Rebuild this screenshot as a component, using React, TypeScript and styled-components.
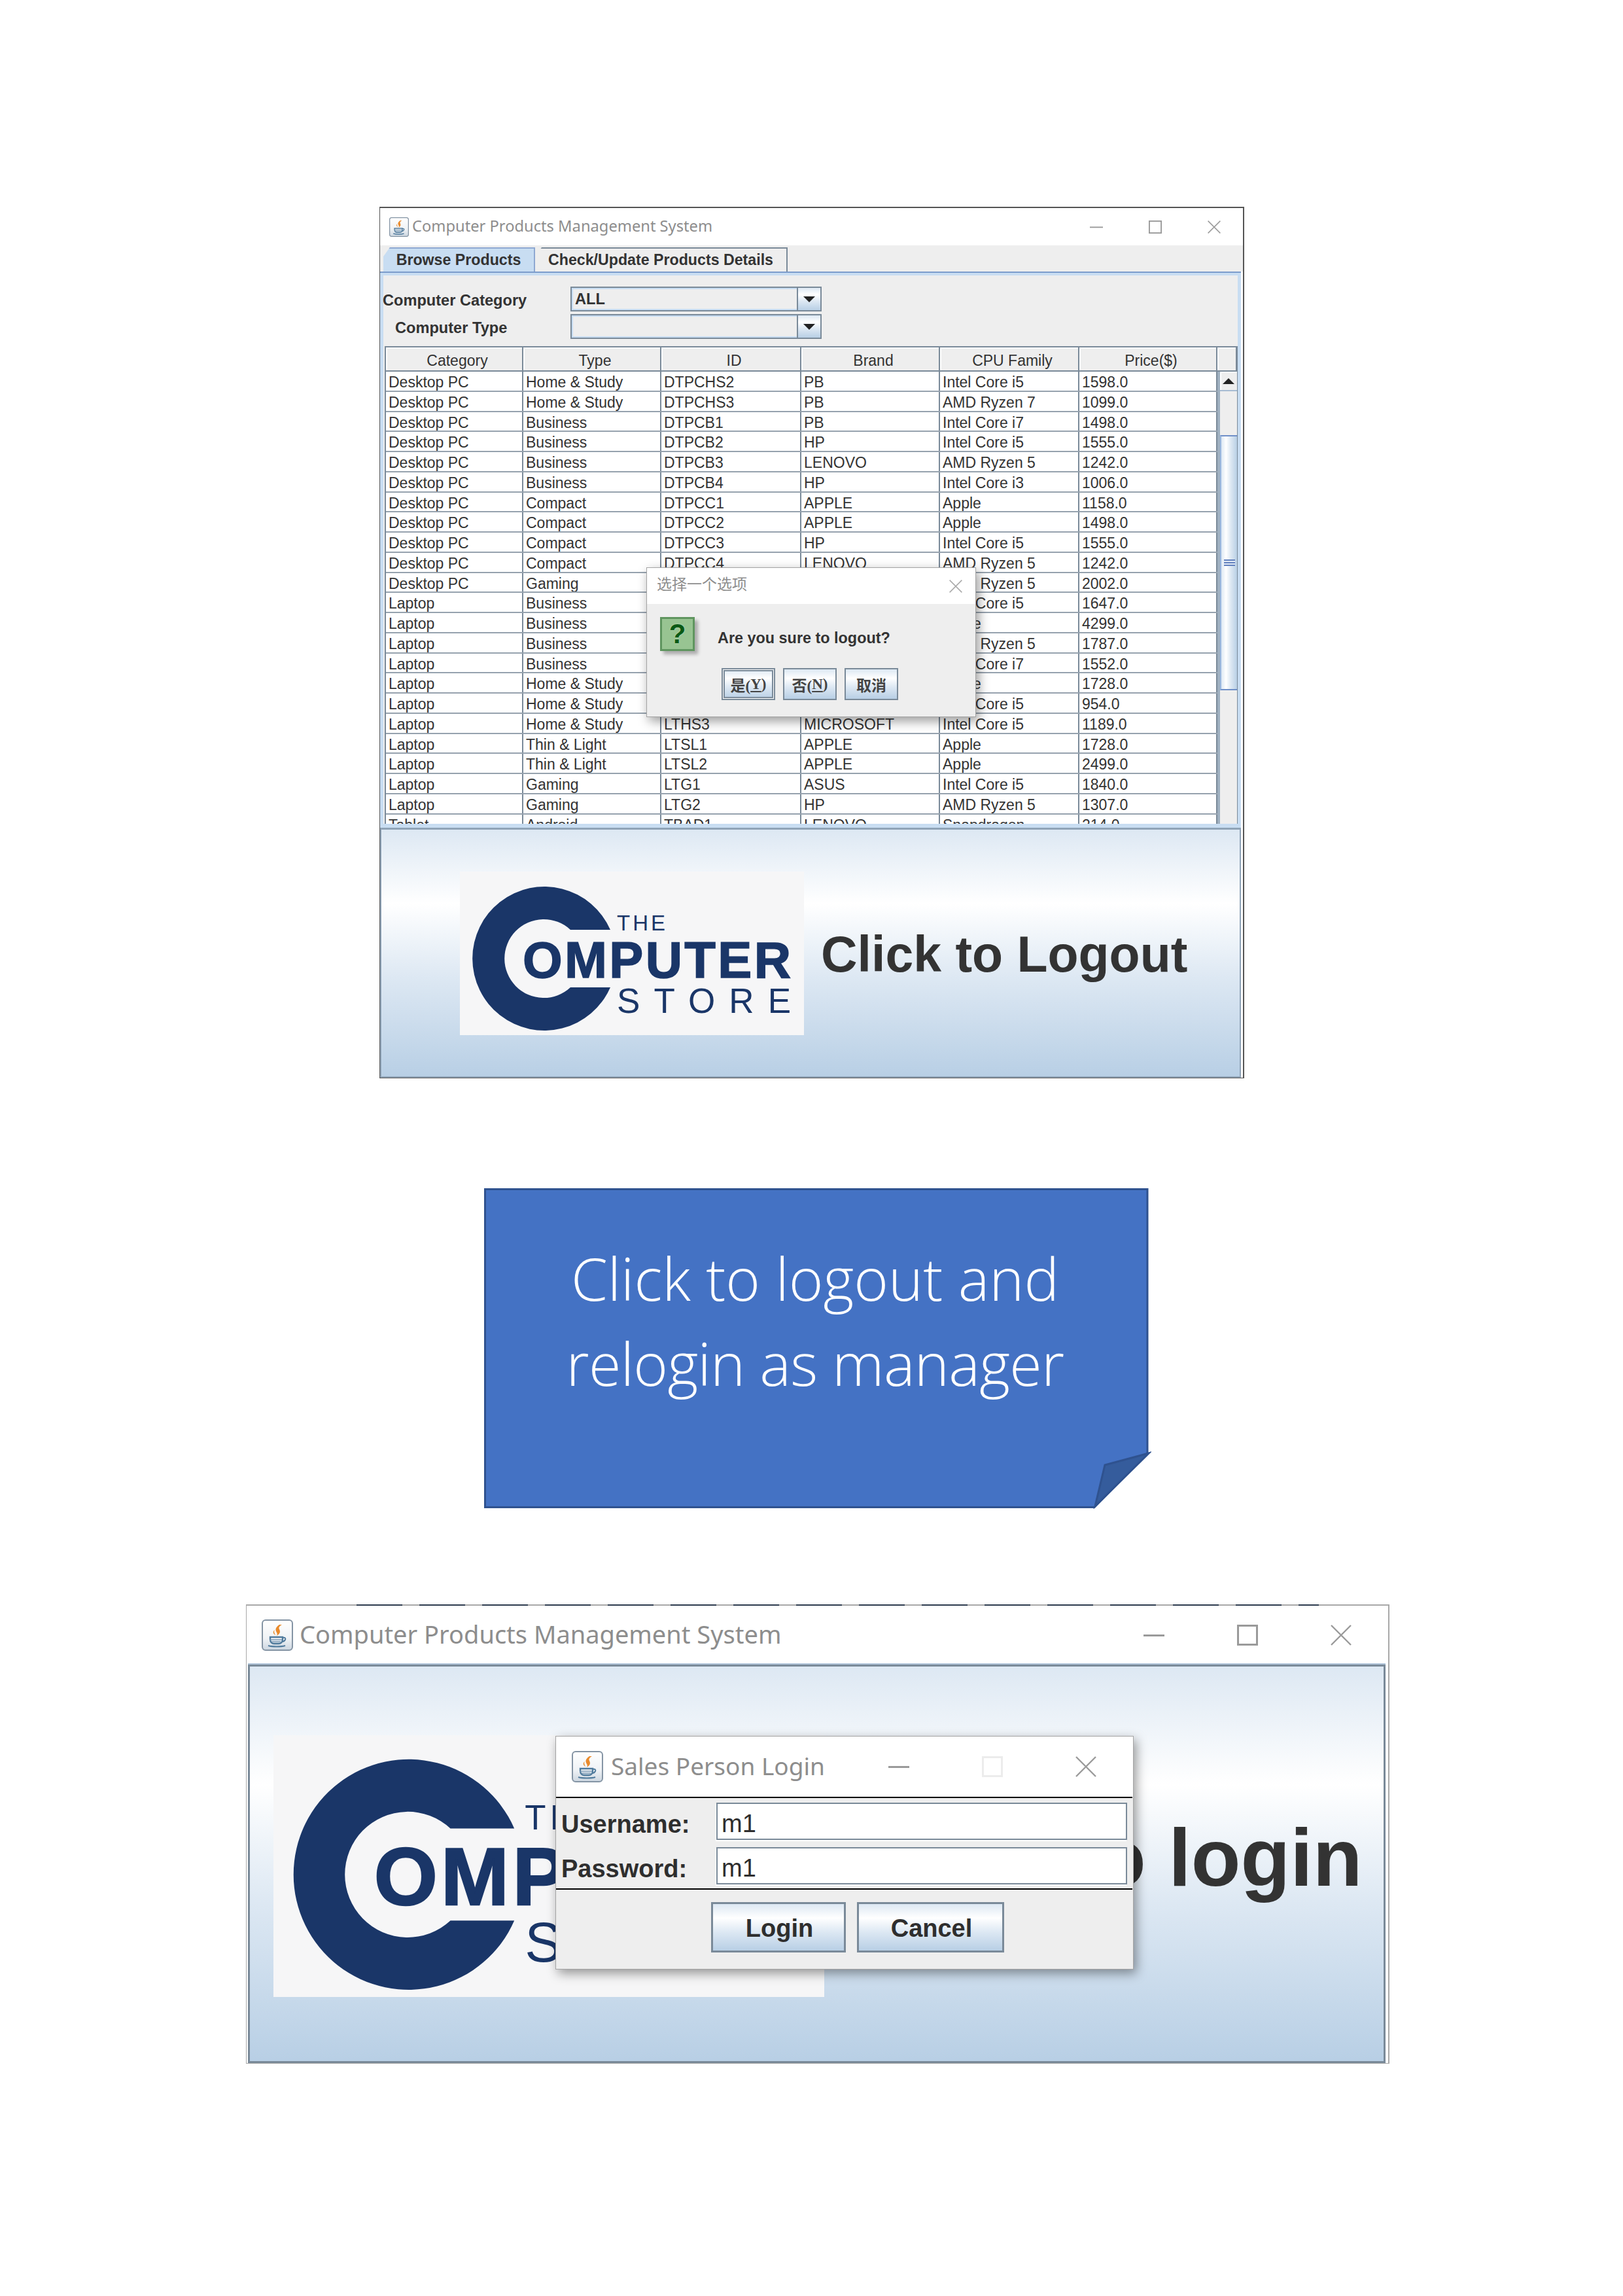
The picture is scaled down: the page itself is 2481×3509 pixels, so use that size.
import React from "react";
import styled, { createGlobalStyle } from "styled-components";

const GlobalStyle = createGlobalStyle`
  html, body {
    margin: 0;
    padding: 0;
    background: #fff;
  }
  * {
    box-sizing: border-box;
  }
`;

const metal = (dir: string) =>
  `linear-gradient(${dir}, #dde8f3 0%, #fff 30%, #dde8f3 60%, #b8cfe5 100%)`;

const SWING_FONT = `"Liberation Sans", Arial, "Noto Sans CJK SC", sans-serif`;
const TITLE_FONT = `"Noto Sans", "Noto Sans CJK SC", sans-serif`;
const NAVY = "#1a3668";
const LINE = "#7a8a99";
const BAND = "#c8ddf2";

const Page = styled.div`
  width: 2481px;
  height: 3509px;
  padding-top: 316px;
  display: flex;
  flex-direction: column;
  overflow: hidden;
`;

const Window = styled.div<{ $left: number; $width: number; $height: number; $top: number; $edge: string }>`
  position: relative;
  flex: none;
  margin-left: ${(p) => p.$left}px;
  margin-top: ${(p) => p.$top}px;
  width: ${(p) => p.$width}px;
  height: ${(p) => p.$height}px;
  display: flex;
  flex-direction: column;
  background: #fff;
  border: 1px solid ${(p) => p.$edge};
  border-top-width: 2px;
  border-right-width: 2px;
`;

const TitleBar = styled.div<{ $height: number; $pad: number; $gap: number; $size: number }>`
  flex: none;
  height: ${(p) => p.$height}px;
  padding-left: ${(p) => p.$pad}px;
  display: flex;
  align-items: center;
  gap: ${(p) => p.$gap}px;
  font-family: ${TITLE_FONT};
  font-size: ${(p) => p.$size}px;
  color: #8d8d8d;
  background: #fff;
  white-space: nowrap;
`;

const TitleText = styled.span<{ $lift: number }>`
  flex: none;
  padding-bottom: ${(p) => p.$lift}px;
`;

const Controls = styled.div<{ $right: number; $step: number }>`
  margin-left: auto;
  margin-right: ${(p) => p.$right}px;
  display: flex;
  gap: ${(p) => p.$step}px;
  align-items: center;
`;

const JavaIcon = ({ size }: { size: number }) => (
  <svg width={size} height={size} viewBox="0 0 48 48" style={{ flex: "none" }}>
    <defs>
      <linearGradient id="javaBg" x1="0" y1="0" x2="0" y2="1">
        <stop offset="0" stopColor="#fff" />
        <stop offset="0.6" stopColor="#f0f3f6" />
        <stop offset="1" stopColor="#ccd6e0" />
      </linearGradient>
    </defs>
    <rect x="1" y="1" width="46" height="46" rx="5" fill="url(#javaBg)" stroke="#8494a4" strokeWidth="2" />
    <path d="M27 8c-7 5-6 8-4 12 1 2 1 3 0 5 5-3 6-6 4-10-1-2-1-4 4-7z" fill="#e98a2c" />
    <path d="M20 16c-2 3 0 5 1 8-3-2-5-5-1-8z" fill="#e98a2c" />
    <path d="M13 27h19v3c0 5-3 7-6 7h-7c-3 0-6-2-6-7z" fill="none" stroke="#4f7a9c" strokeWidth="2.4" />
    <path d="M32 28c4-1 5 1 4 3-1 2-3 3-5 3" fill="none" stroke="#4f7a9c" strokeWidth="2" />
    <path d="M13 31h18M15 34h14" stroke="#7d9cb6" strokeWidth="1.6" />
    <path d="M10 40c6 2 20 2 26 0" fill="none" stroke="#4f7a9c" strokeWidth="2.2" />
  </svg>
);

const WinIcon = ({ kind, size, color = "#9a9a9a" }: { kind: "min" | "max" | "close"; size: number; color?: string }) => (
  <svg width={size} height={size} viewBox="0 0 32 32" fill="none" stroke={color} strokeWidth="2.4">
    {kind === "min" && <path d="M0 16.5h32" strokeWidth="3" />}
    {kind === "max" && <rect x="1.5" y="1.5" width="29" height="29" strokeWidth="3" />}
    {kind === "close" && <path d="M1 1l30 30M31 1L1 31" />}
  </svg>
);

const LogoSvg = styled.svg`
  flex: none;
  display: block;
`;

const Logo = ({ width }: { width: number }) => (
  <LogoSvg width={width} viewBox="0 0 526 250">
    <rect width="526" height="250" fill="#f6f6f7" />
    <path d="M230 89A110 110 0 1 0 230 177L169 177A60 60 0 1 1 169 89Z" fill={NAVY} />
    <g fill={NAVY} fontFamily={SWING_FONT} fontWeight="400">
      <text x="96" y="162" fontSize="78" fontWeight="700" stroke={NAVY} strokeWidth="1.5" textLength="410">
        OMPUTER
      </text>
      <text x="240" y="90" fontSize="33" textLength="74">
        THE
      </text>
      <text x="240" y="216" fontSize="53" textLength="266">
        STORE
      </text>
    </g>
  </LogoSvg>
);

const Banner = styled.div<{ $pad: number; $gap: number; $size: number; $drop: number }>`
  flex: 1;
  display: flex;
  align-items: center;
  gap: ${(p) => p.$gap}px;
  padding: ${(p) => p.$drop}px 0 0 ${(p) => p.$pad}px;
  background: ${metal("to bottom")};
  font-family: ${SWING_FONT};
  font-weight: 700;
  font-size: ${(p) => p.$size}px;
  color: #333;
  white-space: nowrap;
  overflow: hidden;
`;

const BannerText = styled.span<{ $lift: number }>`
  margin-bottom: ${(p) => p.$lift}px;
`;

/* --- first window: tabs, filters, table --- */

const TabStrip = styled.div`
  flex: none;
  height: 40px;
  padding: 3px 0 0 5px;
  display: flex;
  align-items: stretch;
  background: #eee;
`;

const Tab = styled.div<{ $active?: boolean; $width: number }>`
  width: ${(p) => p.$width}px;
  display: flex;
  align-items: center;
  justify-content: center;
  font: 700 23.2px ${SWING_FONT};
  color: #333;
  background: ${(p) => (p.$active ? BAND : "#eee")};
  border: 2px solid ${(p) => (p.$active ? "#8ea8d2" : LINE)};
  border-bottom: 0;
  border-left-width: 0;
  clip-path: polygon(10px 0, 100% 0, 100% 100%, 0 100%, 0 14px);
`;

const TabBody = styled.div`
  flex: none;
  height: 850px;
  margin-right: 3px;
  border-top: 2px solid #7c9ccb;
  background: #eee;
  padding: 21px 5px 6px 7px;
  box-shadow: inset 0 4px 0 ${BAND}, inset 5px 0 0 ${BAND}, inset -5px 0 0 ${BAND}, inset 0 -6px 0 ${BAND};
  display: flex;
  flex-direction: column;
`;

const Filters = styled.div`
  flex: none;
  display: flex;
  flex-direction: column;
  gap: 4px;
  margin-bottom: 11px;
  margin-left: -3px;
`;

const FilterRow = styled.div<{ $indent: number }>`
  display: flex;
  align-items: center;
  padding-left: ${(p) => p.$indent}px;
`;

const FilterLabel = styled.div<{ $width: number }>`
  width: ${(p) => p.$width}px;
  padding-top: 4px;
  font: 700 23.6px ${SWING_FONT};
  color: #333;
  white-space: nowrap;
`;

const Combo = styled.div`
  width: 384px;
  height: 38px;
  display: flex;
  border: 2px solid ${LINE};
  background: #eee;
`;

const ComboValue = styled.div`
  flex: 1;
  padding-left: 3px;
  border: 2px solid ${BAND};
  border-right: 0;
  display: flex;
  align-items: center;
  font: 700 23.6px ${SWING_FONT};
  color: #333;
`;

const ComboArrow = styled.div`
  flex: none;
  width: 36px;
  display: flex;
  align-items: center;
  justify-content: center;
  background: ${metal("to bottom")};
  border-left: 2px solid ${LINE};
`;

const Triangle = styled.span<{ $up?: boolean; $w: number }>`
  display: block;
  width: 0;
  height: 0;
  border-left: ${(p) => p.$w}px solid transparent;
  border-right: ${(p) => p.$w}px solid transparent;
  ${(p) => (p.$up ? "border-bottom" : "border-top")}: ${(p) => p.$w}px solid #222;
`;

const ScrollPane = styled.div`
  flex: 1;
  min-height: 0;
  display: flex;
  flex-direction: column;
  border: 2px solid ${LINE};
  border-bottom: 0;
  border-right-width: 1px;
`;

const COLUMNS = "210px 211px 214px 212px 213px 211px";

const HeaderRow = styled.div`
  flex: none;
  height: 37px;
  display: grid;
  grid-template-columns: ${COLUMNS} 1fr;
  border-bottom: 2px solid ${LINE};
  background: #eee;
`;

const HeaderCell = styled.div`
  display: flex;
  align-items: center;
  justify-content: center;
  padding: 6px 0 0 10px;
  font: 400 23px ${SWING_FONT};
  color: #333;
  border-right: 2px solid ${LINE};
  box-shadow: inset 2px 2px 0 #fff;
`;

const BodyArea = styled.div`
  flex: 1;
  min-height: 0;
  display: flex;
  overflow: hidden;
`;

const Rows = styled.div`
  flex: none;
  width: 1271px;
  background: #fff;
  overflow: hidden;
`;

const Row = styled.div`
  height: 30.75px;
  display: grid;
  grid-template-columns: ${COLUMNS};
  border-bottom: 2px solid #96a2ae;
`;

const Cell = styled.div`
  padding: 3px 0 0 4px;
  border-right: 2px solid ${LINE};
  font: 400 23px/26px ${SWING_FONT};
  color: #333;
  white-space: nowrap;
  overflow: hidden;
`;

const ScrollBar = styled.div`
  flex: 1;
  display: flex;
  flex-direction: column;
  background: #eee;
  border-left: 4px solid #9fb0c0;
`;

const ScrollUp = styled.div`
  flex: none;
  height: 30px;
  display: flex;
  align-items: center;
  justify-content: center;
  background: #eee;
  box-shadow: inset 2px 2px 0 #fff;
  border-bottom: 2px solid #a6bbd2;
`;

const ScrollGap = styled.div<{ $height?: number }>`
  flex: ${(p) => (p.$height ? `none` : 1)};
  height: ${(p) => (p.$height ? `${p.$height}px` : "auto")};
`;

const ScrollThumb = styled.div`
  flex: none;
  height: 390px;
  display: flex;
  align-items: center;
  justify-content: center;
  background: ${metal("to right")};
  border-top: 2px solid #6f8fc8;
  border-bottom: 2px solid #6f8fc8;
  border-left: 2px solid #9ab8e0;
`;

const Grip = styled.div`
  width: 17px;
  height: 10px;
  background: repeating-linear-gradient(to bottom, #6382bf 0 2px, #dfe8f4 2px 4px);
`;

const LogoutPanel = styled(Banner)`
  border: 2px solid #8fa3b7;
  border-top-width: 3px;
  margin-right: 3px;
`;

/* --- floating dialogs --- */

const Dialog = styled.div<{ $left: number; $top: number; $width: number; $height: number }>`
  position: absolute;
  left: ${(p) => p.$left}px;
  top: ${(p) => p.$top}px;
  width: ${(p) => p.$width}px;
  height: ${(p) => p.$height}px;
  display: flex;
  flex-direction: column;
  background: #eee;
  border: 1px solid #a4a4a4;
  box-shadow: 4px 6px 16px rgba(0, 0, 0, 0.4);
`;

const ConfirmBody = styled.div`
  flex: 1;
  padding: 20px 0 0 20px;
  display: flex;
  flex-direction: column;
`;

const ConfirmTop = styled.div`
  display: flex;
  align-items: center;
  gap: 35px;
  height: 52px;
`;

const QuestionBadge = styled.div`
  flex: none;
  width: 53px;
  height: 52px;
  display: flex;
  align-items: center;
  justify-content: center;
  background: #98c492;
  border: 3px solid #5f955f;
  box-shadow: 5px 5px 5px rgba(0, 0, 0, 0.28);
  font: 700 42px ${SWING_FONT};
  color: #0a5a14;
  text-shadow: 0 0 2px #cfe8cb;
`;

const ConfirmText = styled.div`
  font: 700 23.4px ${SWING_FONT};
  color: #333;
  padding-top: 12px;
  white-space: nowrap;
`;

const ConfirmButtons = styled.div`
  margin: 26px 0 0 94px;
  display: flex;
  gap: 12px;
`;

const SmallButton = styled.div<{ $focus?: boolean }>`
  width: 82px;
  height: 49px;
  display: flex;
  align-items: center;
  justify-content: center;
  background: ${metal("to bottom")};
  border: 2px solid ${LINE};
  box-shadow: ${(p) => (p.$focus ? `inset 0 0 0 1px #fff, inset 0 0 0 3px ${LINE}` : "none")};
  font: 700 23px "Liberation Serif", "Noto Sans CJK SC", serif;
  color: #444;
  white-space: nowrap;
`;

const Mnemonic = styled.u`
  text-underline-offset: 3px;
`;

const LoginFields = styled.div`
  flex: none;
  height: 142px;
  margin-right: 1px;
  padding: 7px 8px 0 8px;
  border-top: 2px solid #000;
  border-bottom: 2px solid #000;
  display: flex;
  flex-direction: column;
  gap: 11px;
`;

const LoginRow = styled.div`
  height: 57px;
  display: flex;
  align-items: center;
`;

const LoginLabel = styled.div`
  flex: none;
  width: 237px;
  padding-top: 9px;
  font: 700 38px ${SWING_FONT};
  color: #2e2e2e;
`;

const LoginInput = styled.div`
  flex: 1;
  height: 57px;
  padding: 8px 0 0 6px;
  display: flex;
  align-items: center;
  background: #fff;
  border: 2px solid ${LINE};
  box-shadow: -1px 2px 0 #fff;
  font: 400 38px ${SWING_FONT};
  color: #2e2e2e;
`;

const LoginButtons = styled.div`
  margin: 19px 0 0 237px;
  display: flex;
  gap: 17px;
`;

const BigButton = styled.div<{ $width: number }>`
  width: ${(p) => p.$width}px;
  height: 77px;
  padding: 3px 0 0 3px;
  display: flex;
  align-items: center;
  justify-content: center;
  background: ${metal("to bottom")};
  border: 3px solid ${LINE};
  font: 700 38px ${SWING_FONT};
  color: #2e2e2e;
`;

/* --- note between the screenshots --- */

const Note = styled.div`
  position: relative;
  flex: none;
  margin: 168px 0 0 740px;
  width: 1020px;
  height: 490px;
  padding: 72px 8px 0 0;
  display: flex;
  flex-direction: column;
  align-items: center;
  font: 300 90px/130px "Open Sans", sans-serif;
  color: #fff;
`;

const NoteShape = styled.svg`
  position: absolute;
  left: 0;
  top: 0;
`;

const NoteLine = styled.div<{ $track?: number }>`
  position: relative;
  white-space: nowrap;
  letter-spacing: ${(p) => p.$track ?? 0}px;
`;

/* the black dashes on the top edge of the third window */
const TopTrace = styled.div`
  position: absolute;
  left: 168px;
  right: 106px;
  top: -2px;
  height: 2px;
  background: repeating-linear-gradient(to right, #2c3a4e 0 70px, #a8a8a8 70px 96px);
`;

const LoginPanel = styled(Banner)`
  border: 3px solid ${LINE};
  margin: 0 4px 0 2px;
  box-shadow: 0 -2px 0 #b0c4d8;
`;

const products: string[][] = [
  ["Desktop PC", "Home & Study", "DTPCHS2", "PB", "Intel Core i5", "1598.0"],
  ["Desktop PC", "Home & Study", "DTPCHS3", "PB", "AMD Ryzen 7", "1099.0"],
  ["Desktop PC", "Business", "DTPCB1", "PB", "Intel Core i7", "1498.0"],
  ["Desktop PC", "Business", "DTPCB2", "HP", "Intel Core i5", "1555.0"],
  ["Desktop PC", "Business", "DTPCB3", "LENOVO", "AMD Ryzen 5", "1242.0"],
  ["Desktop PC", "Business", "DTPCB4", "HP", "Intel Core i3", "1006.0"],
  ["Desktop PC", "Compact", "DTPCC1", "APPLE", "Apple", "1158.0"],
  ["Desktop PC", "Compact", "DTPCC2", "APPLE", "Apple", "1498.0"],
  ["Desktop PC", "Compact", "DTPCC3", "HP", "Intel Core i5", "1555.0"],
  ["Desktop PC", "Compact", "DTPCC4", "LENOVO", "AMD Ryzen 5", "1242.0"],
  ["Desktop PC", "Gaming", "DTPCG1", "ASUS", "AMD Ryzen 5", "2002.0"],
  ["Laptop", "Business", "LTB1", "HP", "Intel Core i5", "1647.0"],
  ["Laptop", "Business", "LTB2", "APPLE", "Apple", "4299.0"],
  ["Laptop", "Business", "LTB3", "ASUS", "AMD Ryzen 5", "1787.0"],
  ["Laptop", "Business", "LTB4", "HP", "Intel Core i7", "1552.0"],
  ["Laptop", "Home & Study", "LTHS1", "APPLE", "Apple", "1728.0"],
  ["Laptop", "Home & Study", "LTHS2", "ASUS", "Intel Core i5", "954.0"],
  ["Laptop", "Home & Study", "LTHS3", "MICROSOFT", "Intel Core i5", "1189.0"],
  ["Laptop", "Thin & Light", "LTSL1", "APPLE", "Apple", "1728.0"],
  ["Laptop", "Thin & Light", "LTSL2", "APPLE", "Apple", "2499.0"],
  ["Laptop", "Gaming", "LTG1", "ASUS", "Intel Core i5", "1840.0"],
  ["Laptop", "Gaming", "LTG2", "HP", "AMD Ryzen 5", "1307.0"],
  ["Tablet", "Android", "TBAD1", "LENOVO", "Snapdragon", "214.0"],
];

const headers = ["Category", "Type", "ID", "Brand", "CPU Family", "Price($)"];

export default function App() {
  return (
    <Page>
      <GlobalStyle />

      <Window $left={580} $top={0} $width={1322} $height={1332} $edge="#555">
        <TitleBar $height={57} $pad={14} $gap={5} $size={23.7}>
          <JavaIcon size={30} />
          <TitleText $lift={4}>Computer Products Management System</TitleText>
          <Controls $right={34} $step={70}>
            <WinIcon kind="min" size={20} />
            <WinIcon kind="max" size={20} />
            <WinIcon kind="close" size={20} />
          </Controls>
        </TitleBar>

        <TabStrip>
          <Tab $active $width={232}>Browse Products</Tab>
          <Tab $width={386}>Check/Update Products Details</Tab>
        </TabStrip>

        <TabBody>
          <Filters>
            <FilterRow $indent={0}>
              <FilterLabel $width={287}>Computer Category</FilterLabel>
              <Combo>
                <ComboValue>ALL</ComboValue>
                <ComboArrow><Triangle $w={9} /></ComboArrow>
              </Combo>
            </FilterRow>
            <FilterRow $indent={19}>
              <FilterLabel $width={268}>Computer Type</FilterLabel>
              <Combo>
                <ComboValue />
                <ComboArrow><Triangle $w={9} /></ComboArrow>
              </Combo>
            </FilterRow>
          </Filters>

          <ScrollPane>
            <HeaderRow>
              {headers.map((h) => (
                <HeaderCell key={h}>{h}</HeaderCell>
              ))}
              <HeaderCell />
            </HeaderRow>
            <BodyArea>
              <Rows>
                {products.map((row) => (
                  <Row key={row[2]}>
                    {row.map((c, i) => (
                      <Cell key={i}>{c}</Cell>
                    ))}
                  </Row>
                ))}
              </Rows>
              <ScrollBar>
                <ScrollUp><Triangle $up $w={9} /></ScrollUp>
                <ScrollGap $height={67} />
                <ScrollThumb><Grip /></ScrollThumb>
                <ScrollGap />
              </ScrollBar>
            </BodyArea>
          </ScrollPane>
        </TabBody>

        <LogoutPanel $pad={120} $gap={26} $size={77} $drop={0}>
          <Logo width={526} />
          <BannerText $lift={-4}>Click to Logout</BannerText>
        </LogoutPanel>

        <Dialog $left={407} $top={549} $width={504} $height={229}>
          <TitleBar $height={55} $pad={15} $gap={0} $size={23}>
            <TitleText $lift={9}>选择一个选项</TitleText>
            <Controls $right={20} $step={0}>
              <WinIcon kind="close" size={20} color="#a8a8a8" />
            </Controls>
          </TitleBar>
          <ConfirmBody>
            <ConfirmTop>
              <QuestionBadge>?</QuestionBadge>
              <ConfirmText>Are you sure to logout?</ConfirmText>
            </ConfirmTop>
            <ConfirmButtons>
              <SmallButton $focus>是(<Mnemonic>Y</Mnemonic>)</SmallButton>
              <SmallButton>否(<Mnemonic>N</Mnemonic>)</SmallButton>
              <SmallButton>取消</SmallButton>
            </ConfirmButtons>
          </ConfirmBody>
        </Dialog>
      </Window>

      <Note>
        <NoteShape width="1020" height="490" viewBox="0 0 1020 490">
          <path d="M1.5 1.5H1014V405L933 487.5H1.5Z" fill="#4472c4" stroke="#2f528f" strokeWidth="3" />
          <path d="M934 486L949 423L1016 405Z" fill="#355c9c" stroke="#2f528f" strokeWidth="3" strokeLinejoin="miter" />
        </NoteShape>
        <NoteLine>Click to logout and</NoteLine>
        <NoteLine $track={-0.7}>relogin as manager</NoteLine>
      </Note>

      <Window $left={376} $top={146} $width={1748} $height={702} $edge="#a8a8a8">
        <TopTrace />
        <TitleBar $height={90} $pad={23} $gap={10} $size={38}>
          <JavaIcon size={48} />
          <TitleText $lift={4}>Computer Products Management System</TitleText>
          <Controls $right={56} $step={111}>
            <WinIcon kind="min" size={32} />
            <WinIcon kind="max" size={32} />
            <WinIcon kind="close" size={32} />
          </Controls>
        </TitleBar>

        <LoginPanel $pad={36} $gap={44} $size={124} $drop={7}>
          <Logo width={842} />
          <BannerText $lift={26}>Click to login</BannerText>
        </LoginPanel>

        <Dialog $left={472} $top={199} $width={884} $height={357}>
          <TitleBar $height={92} $pad={24} $gap={12} $size={37}>
            <JavaIcon size={48} />
            <TitleText $lift={4}>Sales Person Login</TitleText>
            <Controls $right={56} $step={111}>
              <WinIcon kind="min" size={32} />
              <WinIcon kind="max" size={32} color="#ececec" />
              <WinIcon kind="close" size={32} />
            </Controls>
          </TitleBar>
          <LoginFields>
            <LoginRow>
              <LoginLabel>Username:</LoginLabel>
              <LoginInput>m1</LoginInput>
            </LoginRow>
            <LoginRow>
              <LoginLabel>Password:</LoginLabel>
              <LoginInput>m1</LoginInput>
            </LoginRow>
          </LoginFields>
          <LoginButtons>
            <BigButton $width={206}>Login</BigButton>
            <BigButton $width={225}>Cancel</BigButton>
          </LoginButtons>
        </Dialog>
      </Window>
    </Page>
  );
}
